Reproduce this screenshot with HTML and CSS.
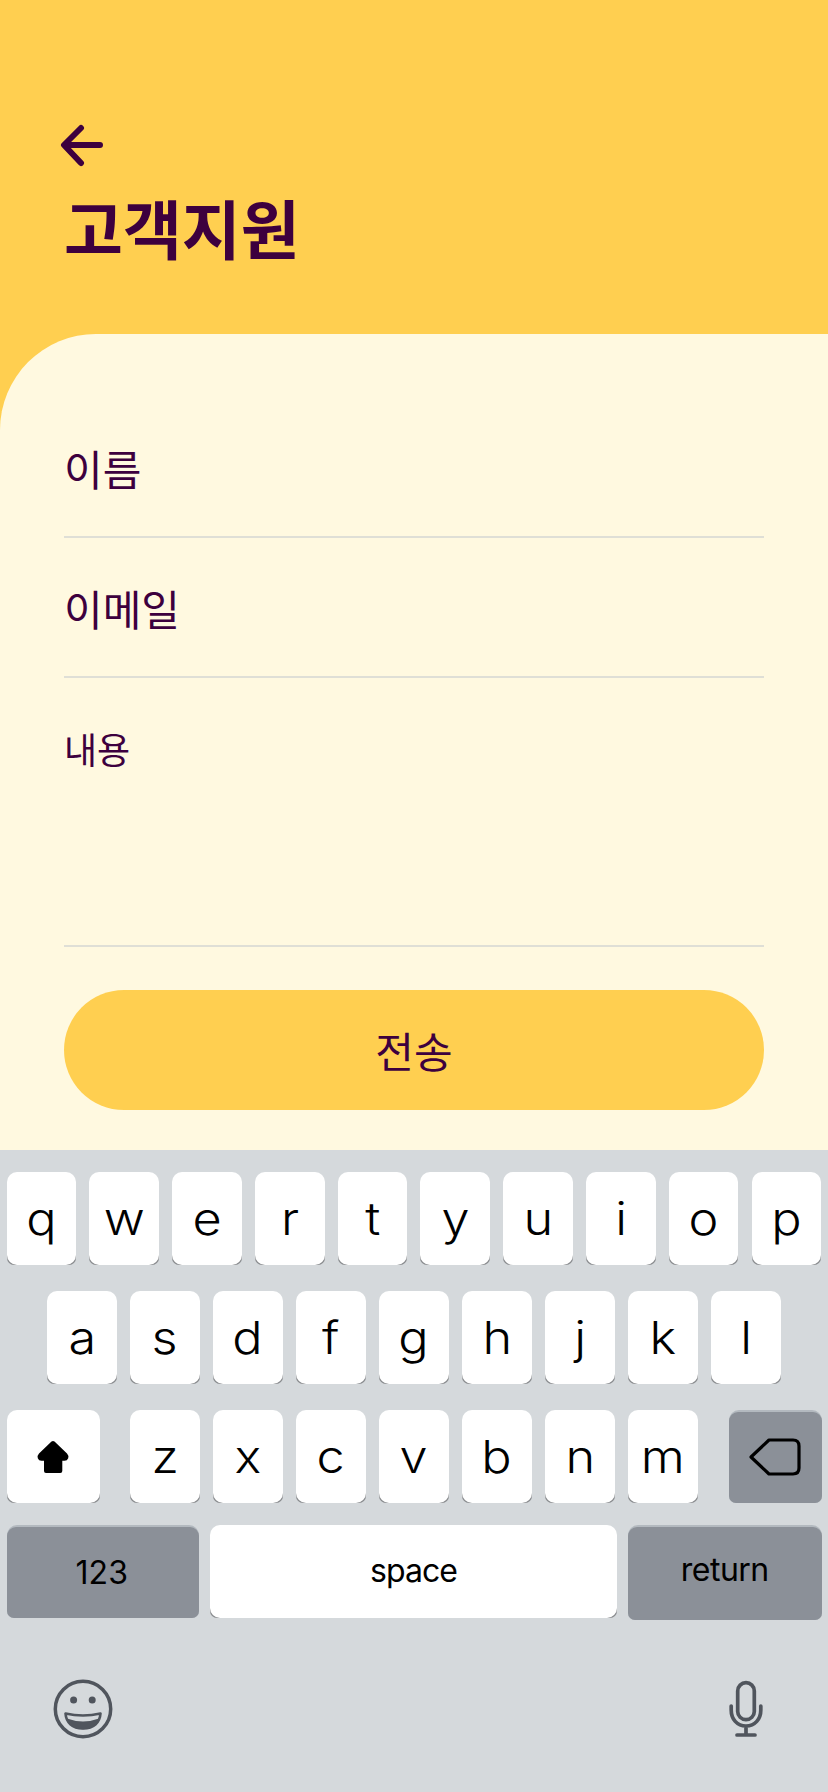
FILE: index.html
```html
<!DOCTYPE html>
<html lang="ko">
<head>
<meta charset="utf-8">
<title>고객지원</title>
<link rel="stylesheet" href="styles.css">
</head>
<body>
<div class="screen">
  <header class="header">
    <svg class="back" width="48" height="48" viewBox="0 0 48 48"><path d="M24 7 7 24 24 42M8 24H43" fill="none" stroke="currentColor" stroke-width="6" stroke-linecap="round" stroke-linejoin="round"/></svg>
    <h1 class="title">고객지원</h1>
  </header>
  <main class="sheet">
    <div class="field">이름</div>
    <div class="field">이메일</div>
    <div class="field message">내용</div>
    <button class="submit">전송</button>
  </main>
  <section class="keyboard">
    <div class="row">
      <div class="key"><span><b>q</b></span></div><div class="key"><span><b>w</b></span></div><div class="key"><span><b>e</b></span></div><div class="key"><span><b>r</b></span></div><div class="key"><span><b>t</b></span></div><div class="key"><span><b>y</b></span></div><div class="key"><span><b>u</b></span></div><div class="key"><span><b>i</b></span></div><div class="key"><span><b>o</b></span></div><div class="key"><span><b>p</b></span></div>
    </div>
    <div class="row middle">
      <div class="key"><span><b>a</b></span></div><div class="key"><span><b>s</b></span></div><div class="key"><span><b>d</b></span></div><div class="key"><span><b>f</b></span></div><div class="key"><span><b>g</b></span></div><div class="key"><span><b>h</b></span></div><div class="key"><span><b>j</b></span></div><div class="key"><span><b>k</b></span></div><div class="key"><span><b>l</b></span></div>
    </div>
    <div class="row spread">
      <div class="key wide"><span><svg width="32" height="34" viewBox="0 0 32 34"><path d="M14.5 1.6Q16 .2 17.5 1.6L30 13.5Q32 15.6 31.2 18.2Q30.300 20.700 27.500 20.700H25.300V31Q25.300 33 23.300 33H9Q7 33 7 31V20.700H4.500Q1.700 20.700.8 18.200Q0 15.600 2 13.500Z"/></svg></span></div>
      <div class="letters">
        <div class="key"><span><b>z</b></span></div><div class="key"><span><b>x</b></span></div><div class="key"><span><b>c</b></span></div><div class="key"><span><b>v</b></span></div><div class="key"><span><b>b</b></span></div><div class="key"><span><b>n</b></span></div><div class="key"><span><b>m</b></span></div>
      </div>
      <div class="key wide dark erase"><span><svg width="52" height="40" viewBox="0 0 52 40"><path d="M20 3H44Q50 3 50 9V31Q50 37 44 37H20L2 20Z" fill="none" stroke="#000" stroke-width="3.200" stroke-linejoin="round"/></svg></span></div>
    </div>
    <div class="row spread bottom">
      <div class="key mode dark"><span>123</span></div>
      <div class="key space"><span>space</span></div>
      <div class="key return dark"><span>return</span></div>
    </div>
    <div class="tools">
      <svg width="60" height="60" viewBox="0 0 60 60"><circle cx="30" cy="30" r="27.700" fill="none" stroke="currentColor" stroke-width="3.500"/><circle cx="20.600" cy="21" r="3.500"/><circle cx="39.200" cy="21" r="3.500"/><path d="M12.500 34.500Q30 38.500 47.500 34.500C47 43 41 49.500 30 49.500C19 49.500 13 43 12.500 34.500Z" fill="none" stroke="currentColor" stroke-width="2.600" stroke-linejoin="round"/><path d="M14 39.500Q30 45.500 46 39.500C43 46.500 38 50.300 30 50.300C22 50.300 17 46.500 14 39.500Z"/></svg>
      <svg width="36" height="58" viewBox="0 0 36 58"><g fill="none" stroke="currentColor" stroke-width="3.700" stroke-linecap="round"><rect x="9.700" y="2.700" width="16.600" height="37" rx="8.300"/><path d="M3.200 26V30C3.200 39 9 46 18 46S32.800 39 32.800 30V26M18 46V55M9 55H27"/></g></svg>
    </div>
  </section>
</div>
</body>
</html>
```

FILE: styles.css
```css
* { box-sizing: border-box; }
body {
  margin: 0;
  background: #ffcf50;
  color: #3d003e;
  font-family: "Noto Sans CJK KR", sans-serif;
}
.screen {
  width: 828px;
  height: 1792px;
  display: flex;
  flex-direction: column;
}
.header {
  height: 334px;
  padding: 121px 0 0 57px;
}
.back { display: block; }
.title {
  margin: 9px 0 0 7px;
  font-size: 64px;
  line-height: 96px;
  font-weight: 700;
}
.sheet {
  height: 816px;
  padding: 64px 64px 0;
  background: #fff9e0;
  border-top-left-radius: 96px;
}
.field {
  height: 140px;
  border-bottom: 2px solid #dfdfd6;
  font-size: 42px;
  line-height: 140px;
}
.message {
  height: 269px;
  font-size: 36px;
}
.submit {
  display: block;
  width: 100%;
  height: 120px;
  margin-top: 43px;
  padding: 0;
  border: 0;
  border-radius: 60px;
  background: #ffcf50;
  color: inherit;
  font: 42px/120px "Noto Sans CJK KR", sans-serif;
}
.keyboard {
  flex: 1;
  padding: 22px 6.500px 0;
  background: #d5d9dc;
  color: #000;
  font-family: Inter, sans-serif;
  font-size: 45px;
}
.row {
  display: flex;
  gap: 13.100px;
  height: 93px;
  margin-bottom: 26px;
}
.middle {
  gap: 13.300px;
  justify-content: center;
}
.spread {
  gap: 0;
  justify-content: space-between;
  margin-bottom: 22px;
}
.letters { display: flex; gap: 13.300px; }
.key {
  width: 69.700px;
  height: 93px;
  border-radius: 10px 10px 7px 7px;
  background: linear-gradient(#d5d9dc 50%, #898b8e 50%);
}
.key span {
  display: flex;
  align-items: center;
  justify-content: center;
  height: 100%;
  border-radius: 10px;
  background: #fff;
}
.key b {
  padding-bottom: 1px;
  font-weight: 350;
  transform: scaleX(1.12);
}
.wide { width: 93px; }
.dark {
  padding-top: 2px;
  border-radius: 10px 10px 7px 7px;
  background: #b3b9bf;
}
.dark span {
  background: #8b9098;
  border-radius: 9px 9px 7px 7px;
}
.erase span { padding-bottom: 2px; }
.bottom { font-size: 32px; }
.mode { width: 192.500px; }
.mode span { padding: 0 2px 1px 0; }
.space {
  width: 406.500px;
  letter-spacing: -0.900px;
}
.space span { padding-bottom: 2px; }
.return {
  width: 193.500px;
  height: 95px;
  letter-spacing: -0.500px;
}
.return span { padding-bottom: 9px; }
.tools {
  display: flex;
  justify-content: space-between;
  align-items: center;
  margin-top: 60.500px;
  padding: 0 58px 0 46.500px;
  color: #50555d;
  fill: currentColor;
}
```
